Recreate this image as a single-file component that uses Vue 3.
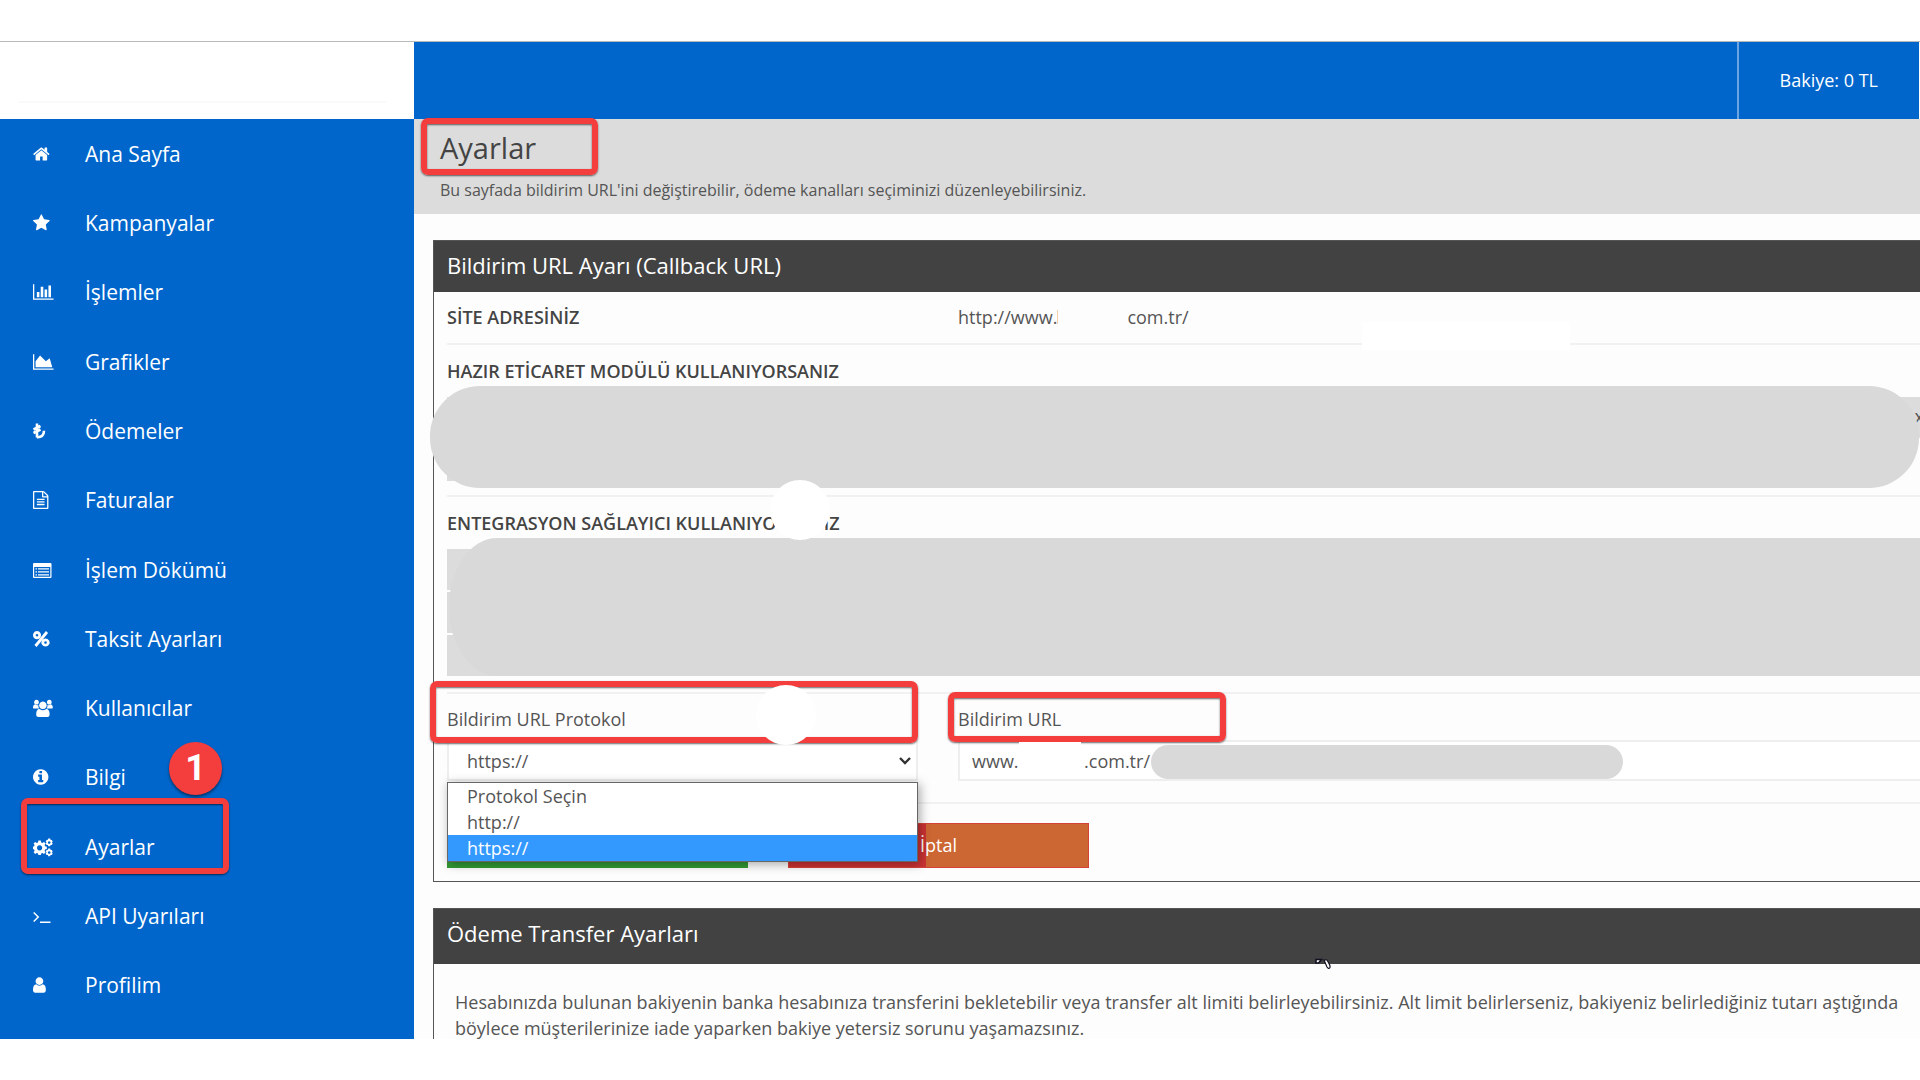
<template>
  <div class="page">
    <div class="shell">
      <aside class="sidebar">
        <div class="logo"></div>
        <nav>
          <ul class="menu">
            <li v-for="item in menu" :key="item.label" class="menu-item">
              <a href="#" class="menu-link">
                <svg class="menu-icon" :viewBox="item.box" aria-hidden="true">
                  <path v-if="item.fill" :d="item.fill" fill="currentColor" fill-rule="evenodd" />
                  <path v-if="item.line" :d="item.line" fill="none" stroke="currentColor" :stroke-width="item.weight" />
                </svg>
                <span>{{ item.label }}</span>
              </a>
              <template v-if="item.marked">
                <span class="mark mark-menu"></span>
                <span class="step">1</span>
              </template>
            </li>
          </ul>
        </nav>
      </aside>

      <main class="content">
        <header class="topbar">
          <div class="balance">Bakiye: 0 TL</div>
        </header>

        <section class="page-title">
          <h1>Ayarlar</h1>
          <p>Bu sayfada bildirim URL'ini değiştirebilir, ödeme kanalları seçiminizi düzenleyebilirsiniz.</p>
          <span class="mark mark-title"></span>
        </section>

        <section class="panel">
          <h2>Bildirim URL Ayarı (Callback URL)</h2>
          <div class="panel-body">
            <div class="row columns site">
              <strong>SİTE ADRESİNİZ</strong>
              <span class="address">http://www.<i class="hidden-part"></i>com.tr/</span>
              <span class="patch patch-row"></span>
            </div>

            <div class="row module">
              <strong>HAZIR ETİCARET MODÜLÜ KULLANIYORSANIZ</strong>
              <div class="notes">
                <p class="note note-end">x</p>
                <p class="note note-short"></p>
              </div>
              <span class="cover cover-module"></span>
            </div>

            <div class="row provider">
              <strong>ENTEGRASYON SAĞLAYICI KULLANIYORSANIZ</strong>
              <div class="notes">
                <p class="note"></p>
                <p class="note"></p>
                <p class="note"></p>
              </div>
              <span class="cover cover-provider"></span>
              <span class="dot dot-provider"></span>
            </div>

            <form class="url-form" @submit.prevent>
              <div class="row columns fields">
                <div class="field">
                  <label for="protocol">Bildirim URL Protokol</label>
                  <select id="protocol" v-model="protocol">
                    <option v-for="option in protocols" :key="option" :value="option">{{ option }}</option>
                  </select>
                  <svg class="arrow" viewBox="0 0 12 8" aria-hidden="true">
                    <path d="M1 1l5 5 5-5" fill="none" stroke="#333" stroke-width="2.4" />
                  </svg>
                  <ul class="options">
                    <li
                      v-for="option in protocols"
                      :key="option"
                      :class="{ selected: option === protocol }"
                      @click="protocol = option"
                    >{{ option }}</li>
                  </ul>
                  <span class="mark mark-protocol"></span>
                  <span class="dot dot-protocol"></span>
                </div>
                <div class="field">
                  <label for="url">Bildirim URL</label>
                  <input id="url" v-model="url" type="text">
                  <span class="cover cover-url"></span>
                  <span class="mark mark-url"></span>
                  <span class="patch patch-url"></span>
                </div>
              </div>
              <div class="buttons">
                <button type="submit" class="save"></button>
                <button type="button" class="cancel">İptal</button>
              </div>
            </form>
          </div>
        </section>

        <section class="panel transfer">
          <h2>Ödeme Transfer Ayarları</h2>
          <svg class="cursor" viewBox="0 0 16 12" aria-hidden="true">
            <path d="M1 5V1.500h5.500L3.500 5z" fill="#fff" stroke="#112" stroke-width="1.6" />
            <path d="M9 2l3 7c2 3 4 1 2.500-2.500L12 2z" fill="#fff" stroke="#112" stroke-width="1.2" />
          </svg>
          <p>
            Hesabınızda bulunan bakiyenin banka hesabınıza transferini bekletebilir veya transfer alt limiti belirleyebilirsiniz. Alt limit belirlerseniz, bakiyeniz belirlediğiniz tutarı aştığında<br>
            böylece müşterilerinize iade yaparken bakiye yetersiz sorunu yaşamazsınız.
          </p>
        </section>
      </main>
    </div>
  </div>
</template>

<script setup>
import { ref } from 'vue';

const protocols = ['Protokol Seçin', 'http://', 'https://'];
const protocol = ref('https://');
const url = ref('www.' + '\u00a0'.repeat(14) + '.com.tr/');

const menu = [
  {
    label: 'Ana Sayfa',
    box: '64 0 1792 1792',
    fill: 'M1472 992v480q0 26-19 45t-45 19h-384v-384h-256v384h-384q-26 0-45-19t-19-45v-480q0-1 .5-3t.5-3l575-474 575 474q1 2 1 6zm223-69l-62 74q-8 9-21 11h-3q-13 0-21-7l-692-577-692 577q-12 8-24 7-13-2-21-11l-62-74q-8-10-7-23.5t11-21.5l719-599q32-26 76-26t76 26l244 204v-195q0-14 9-23t23-9h192q14 0 23 9t9 23v408l219 182q10 8 11 21.5t-7 23.5z'
  },
  {
    label: 'Kampanyalar',
    box: '64 0 1792 1792',
    fill: 'M1728 647q0 22-26 48l-363 354 86 500q1 7 1 20 0 21-10.5 35.5t-30.5 14.5q-19 0-40-12l-449-236-449 236q-22 12-40 12-21 0-31.5-14.5t-10.5-35.5q0-6 2-20l86-500-364-354q-25-27-25-48 0-37 56-46l502-73 225-455q19-41 49-41t49 41l225 455 502 73q56 9 56 46z'
  },
  {
    label: 'İşlemler',
    box: '0 0 1792 1792',
    fill: 'M640 896v512h-256v-512h256zm384-512v1024h-256v-1024h256zm1024 1152v128h-2048v-1536h128v1408h1920zm-640-896v768h-256v-768h256zm384-384v1152h-256v-1152h256z'
  },
  {
    label: 'Grafikler',
    box: '0 0 1792 1792',
    fill: 'M2048 1536v128h-2048v-1536h128v1408h1920zm-384-1024l256 896h-1664v-576l448-576 576 576z'
  },
  {
    label: 'Ödemeler',
    box: '0 0 18 18',
    line: 'M4 1.5v14M0.5 7.5l7-3.5M0.5 11l7-3.5M4 15.2c4.500 0.300 7-2 7-6.400',
    weight: 2.6
  },
  {
    label: 'Faturalar',
    box: '128 0 1792 1792',
    fill: 'M1596 380q28 28 48 76t20 88v1152q0 40-28 68t-68 28h-1344q-40 0-68-28t-28-68v-1600q0-40 28-68t68-28h896q40 0 88 20t76 48zm-444-244v376h376q-10-29-22-41l-313-313q-12-12-41-22zm384 1528v-1024h-416q-40 0-68-28t-28-68v-416h-768v1536h1280zm-1024-864q0-14 9-23t23-9h704q14 0 23 9t9 23v64q0 14-9 23t-23 9h-704q-14 0-23-9t-9-23v-64zm736 224q14 0 23 9t9 23v64q0 14-9 23t-23 9h-704q-14 0-23-9t-9-23v-64q0-14 9-23t23-9h704zm0 256q14 0 23 9t9 23v64q0 14-9 23t-23 9h-704q-14 0-23-9t-9-23v-64q0-14 9-23t23-9h704z'
  },
  {
    label: 'İşlem Dökümü',
    box: '0 0 18 18',
    fill: 'M1 2h16.500q1 0 1 1v13q0 1-1 1H1q-1 0-1-1V3q0-1 1-1zM1.200 6v9.800h16.100V6z',
    line: 'M2.500 7.800h1.500M5 7.800h11M2.500 10.800h1.500M5 10.800h11M2.500 13.800h1.500M5 13.800h11',
    weight: 1.3
  },
  {
    label: 'Taksit Ayarları',
    box: '0 0 18 18',
    line: 'M14 2L2.500 16M4 2.500a2.700 2.700 0 1 0 .01 0zM12.500 9.800a2.700 2.700 0 1 0 .01 0z',
    weight: 2.8
  },
  {
    label: 'Kullanıcılar',
    box: '0 0 18 18',
    fill: 'M3.500 0.800a2.400 2.400 0 1 1-.01 0zM16.300 0.800a2.400 2.400 0 1 1-.01 0zM9.900 2.500a3.800 3.800 0 1 1-.01 0zM0 9q0-3.500 2-3.500 1.500 1 3.300.5-.3 2.200 1 3.500H1.500Q0 9.500 0 9zM19.800 9q0-3.500-2-3.500-1.500 1-3.300.5.300 2.200-1 3.500h4.800q1.500 0 1.500-.5zM6.500 10q3.400 2.500 6.800 0 3.300 0 3.300 5.500 0 2.500-2.500 2.500H5.700q-2.500 0-2.500-2.500 0-5.500 3.300-5.500z'
  },
  {
    label: 'Bilgi',
    box: '128 0 1792 1792',
    fill: 'M1152 1376v-160q0-14-9-23t-23-9h-96v-512q0-14-9-23t-23-9h-320q-14 0-23 9t-9 23v160q0 14 9 23t23 9h96v320h-96q-14 0-23 9t-9 23v160q0 14 9 23t23 9h448q14 0 23-9t9-23zm-128-896v-160q0-14-9-23t-23-9h-192q-14 0-23 9t-9 23v160q0 14 9 23t23 9h192q14 0 23-9t9-23zm640 416q0 209-103 385.5t-279.5 279.5-385.5 103-385.5-103-279.5-279.5-103-385.5 103-385.5 279.5-279.5 385.5-103 385.500 103 279.500 279.500 103 385.500z'
  },
  {
    label: 'Ayarlar',
    marked: true,
    box: '0 0 18 18',
    fill: 'M5.400 2.500h2.400l.4 1.900 1.200.5 1.600-1 1.600 1.600-1 1.600.5 1.200 1.700.4v2.400l-1.700.4-.5 1.200 1 1.600-1.600 1.600-1.600-1-1.200.5-.4 1.700H5.400L5 15.400l-1.200-.5-1.600 1L.6 14.300l1-1.600-.5-1.200L0 11.100V8.700l1.100-.4.5-1.200-1-1.600 1.600-1.600 1.600 1L5 4.400zM6.600 7.300a2.600 2.600 0 1 0 .01 0zM15.300.5h1.800l.4 1.200 1.300.2.900 1.500-.8 1 .8 1.100-.9 1.500-1.300.1-.4 1.200h-1.800l-.4-1.200-1.300-.1-.9-1.500.8-1.100-.8-1 .9-1.500 1.300-.2zM16.200 3.200a1.300 1.300 0 1 0 .01 0zM15.300 10.500h1.800l.4 1.200 1.300.2.900 1.500-.8 1 .8 1.100-.9 1.500-1.300.1-.4 1.200h-1.800l-.4-1.200-1.300-.1-.9-1.500.8-1.100-.8-1 .9-1.500 1.300-.2zM16.200 13.200a1.300 1.300 0 1 0 .01 0z'
  },
  {
    label: 'API Uyarıları',
    box: '0 0 18 18',
    line: 'M.7 5.500l4.500 4.500-4.500 4.500M7 15.200h10.500',
    weight: 1.5
  },
  {
    label: 'Profilim',
    box: '256 0 1792 1792',
    fill: 'M1536 1399q0 109-62.5 187t-150.500 78h-854q-88 0-150.500-78t-62.500-187q0-85 8.500-160.500t31.500-152 58.500-131 94-89 134.500-34.500q131 128 313 128t313-128q76 0 134.500 34.500t94 89 58.500 131 31.500 152 8.500 160.500zm-256-887q0 159-112.500 271.500t-271.500 112.500-271.500-112.500-112.500-271.500 112.500-271.500 271.500-112.500 271.500 112.500 112.500 271.500z'
  }
];
</script>

<style>
body {
  background-color: #fff;
}
</style>

<style scoped>
.page {
  box-sizing: border-box;
  height: 100vh;
  padding: 41px 0;
  overflow: hidden;
  font-family: "Open Sans", "Noto Sans", sans-serif;
  font-size: 18px;
  line-height: 26px;
  color: #555;
}

.shell {
  display: grid;
  grid-template-columns: 414px minmax(0, 1fr);
  grid-template-rows: minmax(0, 1fr);
  height: 100%;
  box-sizing: border-box;
  overflow: hidden;
  border-top: 1px solid #b9b9b9;
  background-color: #fdfdfd;
}

/* sidebar */
.sidebar {
  display: flex;
  flex-direction: column;
  min-height: 0;
  background-color: #0066cc;
  color: #fff;
}

.logo {
  height: 61px;
  padding: 0 27px 16px 19px;
  background-color: #fff;
}

.logo::after {
  content: "";
  display: block;
  height: 100%;
  border-bottom: 2px solid #fafafa;
  box-sizing: border-box;
}

nav {
  flex: 1;
  display: flex;
  padding-bottom: 19px;
}

.menu {
  flex: 1;
  display: flex;
  flex-direction: column;
  margin: 0;
  padding: 0;
  list-style: none;
}

.menu-item {
  flex: 1;
  display: flex;
  position: relative;
}

.menu-link {
  flex: 1;
  display: flex;
  align-items: center;
  padding-left: 33px;
  color: #fff;
  font-size: 21px;
  text-decoration: none;
}

.menu-icon {
  width: 18px;
  height: 18px;
  margin-right: 34px;
  overflow: visible;
}

/* red frames and the white and grey shapes laid over the form */
.mark {
  position: absolute;
  box-sizing: border-box;
  border: 6px solid #f43d3d;
  border-radius: 7px;
  box-shadow: 0 1px 2px rgba(0, 0, 0, 0.6), inset 0 1px 2px rgba(0, 0, 0, 0.6);
  pointer-events: none;
}

.mark-menu {
  left: 21px;
  top: -14px;
  width: 208px;
  height: 76px;
}

.mark-title {
  left: 7px;
  top: -1px;
  width: 177px;
  height: 57px;
}

.mark-protocol {
  left: -17px;
  top: -13px;
  width: 488px;
  height: 62px;
}

.mark-url {
  left: -10px;
  top: -2px;
  width: 278px;
  height: 50px;
}

.step {
  position: absolute;
  left: 169px;
  top: -70px;
  width: 53px;
  height: 53px;
  border-radius: 50%;
  background-color: #f43d3d;
  box-shadow: 0 2px 3px rgba(0, 0, 0, 0.5);
  font-family: Roboto, sans-serif;
  font-size: 36px;
  font-weight: bold;
  line-height: 53px;
  text-align: center;
}

.cover {
  position: absolute;
  background-color: #d9d9d9;
  pointer-events: none;
}

.cover-module {
  left: -17px;
  right: 20px;
  top: 41px;
  height: 102px;
  border-radius: 50px;
}

.cover-provider {
  left: 2px;
  right: -60px;
  top: 41px;
  height: 138px;
  border-radius: 48px / 69px;
}

.cover-url {
  left: 193px;
  top: 51px;
  width: 472px;
  height: 34px;
  border-radius: 17px;
}

.dot {
  position: absolute;
  width: 60px;
  height: 60px;
  border-radius: 50%;
  background-color: #fff;
  pointer-events: none;
}

.dot-provider {
  left: 323px;
  top: -17px;
}

.dot-protocol {
  left: 309px;
  top: -9px;
}

.patch {
  position: absolute;
  background-color: #fff;
  pointer-events: none;
}

.patch-row {
  left: 915px;
  top: 30px;
  width: 208px;
  height: 28px;
}

.patch-url {
  left: 61px;
  top: 48px;
  width: 62px;
  height: 29px;
}

/* top */
.topbar {
  display: flex;
  justify-content: flex-end;
  height: 77px;
  background-color: #0066cc;
}

.balance {
  display: flex;
  align-items: center;
  padding: 0 41px 2px;
  border-left: 2px solid #6aa5e1;
  border-right: 1px solid #fff;
  color: #fff;
}

.page-title {
  position: relative;
  box-sizing: border-box;
  height: 95px;
  padding: 10px 26px 0;
  background-color: #dcdcdc;
}

h1 {
  margin: 0;
  font-size: 29px;
  font-weight: 400;
  line-height: 38px;
  color: #444;
}

.page-title p {
  margin: 10px 0 0;
  font-size: 16px;
  line-height: 26px;
}

/* panels */
.panel {
  position: relative;
  margin: 26px -20px 0 19px;
  border: 1px solid #555;
}

h2 {
  margin: 0;
  padding: 0 13px 2px;
  background-color: #424242;
  color: #fff;
  font-size: 22px;
  font-weight: 400;
  line-height: 49px;
}

.panel-body {
  padding: 0 0 13px 13px;
}

.row {
  position: relative;
  border-bottom: 2px solid #f1f1f1;
}

.columns {
  display: grid;
  grid-template-columns: 471px minmax(0, 1fr);
  column-gap: 40px;
}

.row strong {
  color: #444;
  font-weight: 600;
}

.site {
  padding: 12px 0 13px;
}

.hidden-part {
  display: inline-block;
  box-sizing: border-box;
  width: 70px;
  height: 14px;
  border-left: 1px solid #f6cfa8;
}

.module,
.provider {
  padding: 13px 0 16px;
}

.module {
  padding-bottom: 14px;
}

.notes {
  display: grid;
  gap: 2px;
  margin-top: 13px;
}

.note {
  box-sizing: border-box;
  height: 41px;
  margin: 0;
  background-color: #dcdcdc;
}

.note-end {
  padding: 6px 15px;
  text-align: right;
}

.note-short {
  margin-right: 60px;
}

.fields {
  padding-bottom: 21px;
}

.field {
  position: relative;
}

.field label {
  display: block;
  padding: 12px 0 8px;
}

.field select,
.field input {
  display: block;
  box-sizing: border-box;
  width: 100%;
  height: 41px;
  border: 2px solid #eee;
  border-radius: 0;
  background-color: #fff;
  color: #555;
  font: inherit;
  outline: none;
}

.field select {
  padding: 0 18px;
  appearance: none;
}

.field input {
  padding: 0 12px;
}

.arrow {
  position: absolute;
  right: 7px;
  top: 63px;
  width: 12px;
  height: 8px;
}

.options {
  position: absolute;
  z-index: 2;
  left: 0;
  right: 0;
  top: 88px;
  margin: 0;
  padding: 0;
  list-style: none;
  border: 1px solid #666;
  background-color: #fff;
  box-shadow: 2px 2px 10px rgba(0, 0, 0, 0.35);
}

.options li {
  padding: 0 19px;
}

.options .selected {
  background-color: #3399ff;
  color: #fff;
}

.buttons {
  display: flex;
  gap: 40px;
  padding-top: 19px;
}

.buttons button {
  width: 301px;
  height: 45px;
  border: 0;
  color: #fff;
  font: inherit;
}

.save {
  background-color: #339933;
}

.buttons .cancel {
  padding-bottom: 2px;
  border: 1px solid #d34437;
  background: linear-gradient(to right, #cc3333 137px, #cc6633 137px);
}

.cursor {
  position: absolute;
  left: 881px;
  top: 49px;
  width: 16px;
  height: 12px;
}

.transfer h2 {
  padding-bottom: 6px;
}

.transfer p {
  margin: 25px 0;
  padding-left: 21px;
  white-space: nowrap;
}
</style>
